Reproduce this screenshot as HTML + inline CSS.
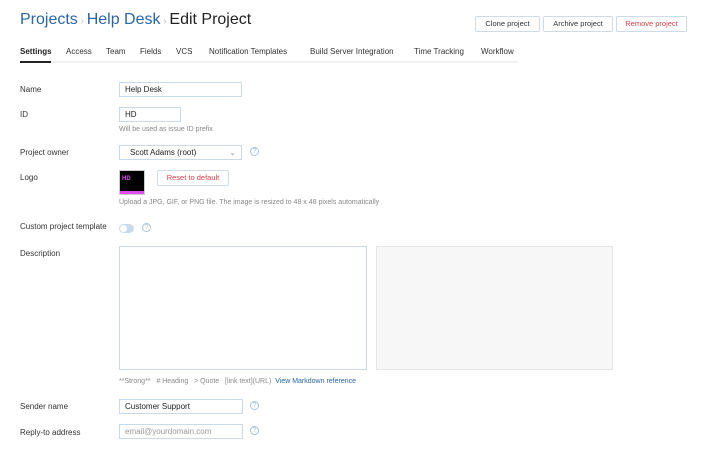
<!DOCTYPE html>
<html><head><style>
body{margin:0;width:706px;height:457px;background:#fff;font-family:"Liberation Sans",sans-serif;font-size:8px;color:#333;position:relative;overflow:hidden}
.a{position:absolute;white-space:nowrap}
.in{position:absolute;border:1px solid #c9dbea;box-sizing:border-box;background:#fff;font-size:8px;padding:0 5px;line-height:13px;color:#222}
.btn{position:absolute;border:1px solid #cfdce8;border-radius:2px;box-sizing:border-box;height:16px;line-height:14px;text-align:center;font-size:7.5px;color:#333;background:#fff}
.q{position:absolute;width:9px;height:9px;border:1px solid #a9c3d9;border-radius:50%;box-sizing:border-box;font-size:7px;line-height:8px;text-align:center;color:#a9c3d9}
.lb{position:absolute;left:20px;font-size:8px;color:#333}
</style></head><body>
<div class="a" style="left:20px;top:11px;font-size:16px;color:#2a66a8">Projects<span style="color:#bbb;font-size:10px"> › </span>Help Desk<span style="color:#bbb;font-size:10px"> › </span><span style="color:#222">Edit Project</span></div>
<div class="btn" style="left:475px;top:16px;width:65px">Clone project</div>
<div class="btn" style="left:543px;top:16px;width:70px">Archive project</div>
<div class="btn" style="left:616px;top:16px;width:71px;color:#d0414c">Remove project</div>
<div class="a" style="left:20px;top:61px;width:498px;height:2px;background:#f0f2f4"></div>
<div class="a" style="left:20px;top:61px;width:31px;height:2px;background:#222"></div>
<div class="a" style="top:47px;left:20px;font-size:8px;font-weight:bold;color:#222">Settings</div>
<div class="a" style="top:47px;left:66px">Access</div>
<div class="a" style="top:47px;left:106px">Team</div>
<div class="a" style="top:47px;left:140px">Fields</div>
<div class="a" style="top:47px;left:176px">VCS</div>
<div class="a" style="top:47px;left:209px">Notification Templates</div>
<div class="a" style="top:47px;left:310px">Build Server Integration</div>
<div class="a" style="top:47px;left:414px">Time Tracking</div>
<div class="a" style="top:47px;left:481px">Workflow</div>

<div class="lb" style="top:85px">Name</div>
<div class="in" style="left:119px;top:82px;width:123px;height:15px">Help Desk</div>
<div class="lb" style="top:110px">ID</div>
<div class="in" style="left:119px;top:107px;width:62px;height:15px">HD</div>
<div class="a" style="left:119px;top:126px;color:#888;font-size:7px">Will be used as issue ID prefix</div>
<div class="lb" style="top:148px">Project owner</div>
<div class="in" style="left:119px;top:145px;width:123px;height:15px;padding-left:10px">Scott Adams (root)<span style="position:absolute;right:5px;color:#999">⌄</span></div>
<div class="q" style="left:250px;top:147px">?</div>
<div class="lb" style="top:173px">Logo</div>
<div class="a" style="left:119px;top:170px;width:26px;height:25px;background:#000;border:1px solid #ccc;box-sizing:border-box"><div style="color:#e04cf0;font-weight:bold;font-size:6px;position:absolute;left:2px;top:5px">HD</div><div style="position:absolute;left:0;bottom:0;width:100%;height:3px;background:#e04cf0"></div></div>
<div class="btn" style="left:157px;top:170px;width:72px;color:#d0414c">Reset to default</div>
<div class="a" style="left:119px;top:199px;color:#888;font-size:7px">Upload a JPG, GIF, or PNG file. The image is resized to 48 x 48 pixels automatically</div>
<div class="lb" style="top:222px">Custom project template</div>
<div class="a" style="left:119px;top:224px;width:15px;height:9px;border-radius:5px;background:#c9dbea"><div style="position:absolute;left:1px;top:1px;width:7px;height:7px;border-radius:50%;background:#fff"></div></div>
<div class="q" style="left:142px;top:223px">?</div>
<div class="lb" style="top:249px">Description</div>
<div class="in" style="left:119px;top:246px;width:248px;height:124px"></div>
<div class="a" style="left:376px;top:246px;width:237px;height:124px;background:#f7f7f7;border:1px solid #e6e6e6;box-sizing:border-box"></div>
<div class="a" style="left:119px;top:378px;color:#888;font-size:7px">**Strong** &nbsp; # Heading &nbsp; &gt; Quote &nbsp; [link text](URL) &nbsp;<span style="color:#2a66a8">View Markdown reference</span></div>
<div class="lb" style="top:402px">Sender name</div>
<div class="in" style="left:119px;top:399px;width:124px;height:15px">Customer Support</div>
<div class="q" style="left:250px;top:401px">?</div>
<div class="lb" style="top:428px">Reply-to address</div>
<div class="in" style="left:119px;top:424px;width:124px;height:15px;color:#999">email@yourdomain.com</div>
<div class="q" style="left:250px;top:426px">?</div>
</body></html>
